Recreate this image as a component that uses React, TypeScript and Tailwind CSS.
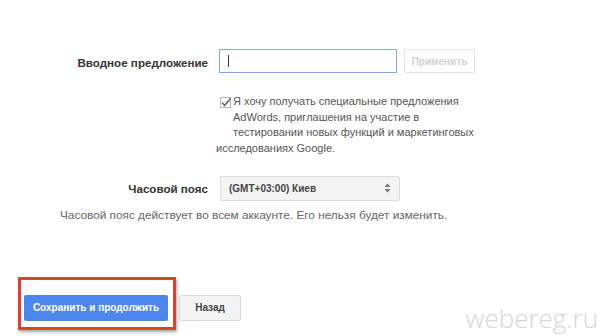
import React from "react";

export default function App() {
  return (
    <div
      className="relative w-[600px] h-[336px] bg-white overflow-hidden"
      style={{ fontFamily: '"Liberation Sans", Arial, sans-serif' }}
    >
      {/* Row 1 */}
      <div className="flex items-center pt-[49px]">
        <div className="w-[208px] text-right text-[11.6px] font-bold text-[#333] pt-[3px]">Вводное предложение</div>
        <div className="ml-[11px] w-[178px] h-[24px] border border-[#87a6e8] bg-white flex items-center pl-[8px]">
          <div className="w-px h-[12px] bg-[#333]" />
        </div>
        <button className="ml-[7px] w-[71px] h-[24px] border border-[#e4e4e4] bg-white text-[10px] font-bold text-[#d2d2d2] rounded-[2px]">
          Применить
        </button>
      </div>

      {/* Checkbox block */}
      <div className="ml-[216px] mt-[21px] text-[11px] leading-[15.7px] text-[#555]">
        <div className="flex">
          <div className="w-[17px] pt-[3px] pl-[4px]">
            <svg width="12" height="12" viewBox="0 0 12 12">
              <rect x="0.5" y="0.5" width="10" height="10" fill="#fff" stroke="#b5b5b5" />
              <path d="M2 5.5 L4.5 8.5 L10.5 1.5" fill="none" stroke="#666" strokeWidth="1.6" />
            </svg>
          </div>
          <div>
            <div>Я хочу получать специальные предложения</div>
            <div>AdWords, приглашения на участие в</div>
            <div>тестировании новых функций и маркетинговых</div>
          </div>
        </div>
        <div>исследованиях Google.</div>
      </div>

      {/* Timezone row */}
      <div className="flex items-center mt-[19px]">
        <div className="w-[208px] text-right text-[11.6px] font-bold text-[#333]">Часовой пояс</div>
        <div className="ml-[12px] w-[180px] h-[25px] border border-[#dcdcdc] bg-[#f4f4f4] rounded-[2px] flex items-center justify-between pl-[8px] pr-[8px]">
          <span className="text-[10px] font-bold text-[#444]">(GMT+03:00) Киев</span>
          <svg width="7" height="10" viewBox="0 0 7 10">
            <path d="M3.5 0.5 L6.5 4 L0.5 4 Z" fill="#777" />
            <path d="M3.5 9.5 L6.5 6 L0.5 6 Z" fill="#777" />
          </svg>
        </div>
      </div>

      {/* Help text */}
      <div className="ml-[60px] mt-[6px] text-[11.8px] text-[#666]">
        Часовой пояс действует во всем аккаунте. Его нельзя будет изменить.
      </div>

      {/* Buttons */}
      <div className="flex mt-[70px] ml-[24px] gap-[11px]">
        <button className="w-[144px] h-[26px] bg-[#4d87ee] rounded-[2px] text-white text-[10px] font-bold">
          Сохранить и продолжить
        </button>
        <button className="w-[62px] h-[26px] bg-[#f3f3f3] border border-[#dcdcdc] rounded-[2px] text-[#444] text-[10px] font-bold">
          Назад
        </button>
      </div>

      {/* Red annotation box */}
      <div className="absolute left-[18px] top-[277px] w-[158px] h-[53px] border-[3px] border-[#d9432f] shadow-[1px_2px_3px_rgba(0,0,0,0.35)]" />

      {/* Watermark */}
      <div className="absolute right-[2px] bottom-[5px] text-[26px] text-[#d6d6d6] leading-none font-light" style={{ fontFamily: '"Open Sans", sans-serif' }}>
        webereg.ru
      </div>
    </div>
  );
}
